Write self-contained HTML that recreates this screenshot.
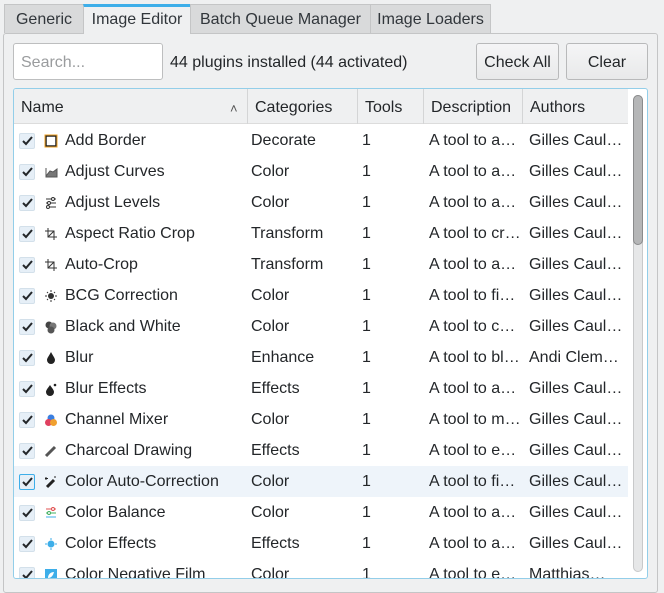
<!DOCTYPE html>
<html><head><style>
*{box-sizing:border-box;margin:0;padding:0}
body{width:664px;height:587px;overflow:hidden;background:#eff0f1;font-family:"Liberation Sans",sans-serif;font-size:16px;color:#232629;position:relative}
.a{position:absolute}
.tab{position:absolute;top:4px;height:29px;background:#d9dadb;border:1px solid #c4c5c6;border-bottom:none;line-height:30px;text-align:center;color:#31363b}
.panel{position:absolute;left:3px;top:33px;width:655px;height:560px;border:1px solid #c4c5c6;border-radius:3px;background:#eff0f1}
.btn{position:absolute;top:43px;height:37px;border:1px solid #b8b9ba;border-radius:3px;background:linear-gradient(#f5f5f6,#e8e9ea);line-height:37px;text-align:center;font-size:16px}
.list{position:absolute;left:13px;top:88px;width:635px;height:491px;border:1px solid #93cee9;border-radius:3px;background:#fff;overflow:hidden}
.hdr{position:absolute;left:0;top:0;width:614px;height:35px;background:#eff0f1;border-bottom:1px solid #dcdcdc}
.h{position:absolute;top:0;height:35px;line-height:38px;padding-left:7px;border-right:1px solid #d4d5d6}
.row{position:absolute;left:0;width:614px;height:31px}
.row span{position:absolute;top:7px;white-space:nowrap}
.cb{position:absolute;left:5px;top:8px;width:16px;height:16px;border:1px solid #d3e0ea;border-radius:2px;background:#e6eff7}
.cb svg{position:absolute;left:2px;top:2px}
.ic{position:absolute;left:30px;top:9px;width:14px;height:14px}
</style></head><body>
<div class="panel"></div>
<div class="tab" style="left:4px;width:80px">Generic</div>
<div class="tab" style="left:83px;width:108px;background:#eff0f1;border-top:3px solid #3daee9;line-height:26px;height:30px">Image Editor</div>
<div class="tab" style="left:190px;width:181px">Batch Queue Manager</div>
<div class="tab" style="left:370px;width:121px">Image Loaders</div>
<div class="a" style="left:13px;top:43px;width:150px;height:37px;border:1px solid #bdbebf;border-radius:3px;background:#fff;padding-left:7px;line-height:37px;color:#9a9c9e;font-size:16px">Search...</div>
<div class="a" style="left:170px;top:54px;font-size:16px">44 plugins installed (44 activated)</div>
<div class="btn" style="left:476px;width:83px">Check All</div>
<div class="btn" style="left:566px;width:82px">Clear</div>
<div class="list">
<div class="hdr">
<div class="h" style="left:0;width:234px">Name<span style="position:absolute;left:216px;top:1px;font-size:13px;color:#555">&#x2c4;</span></div>
<div class="h" style="left:234px;width:110px">Categories</div>
<div class="h" style="left:344px;width:66px">Tools</div>
<div class="h" style="left:410px;width:99px">Description</div>
<div class="h" style="left:509px;width:105px;border-right:none">Authors</div>
</div>
<div class="a" style="left:619px;top:6px;width:10px;height:477px;border:1px solid #c8c9ca;border-radius:5px;background:#e6e7e8"></div>
<div class="a" style="left:619px;top:6px;width:10px;height:150px;border:1px solid #8a8b8c;border-radius:5px;background:#b5b6b7"></div>
<div id="rows"></div>
</div>
<script>
var d=[["Add Border","Decorate","a…","Gilles Caul…","<rect x='2' y='2' width='10' height='10' fill='#fff' stroke='#222' stroke-width='1.5'/><rect x='1' y='1' width='12' height='12' fill='none' stroke='#f0a020' stroke-width='1'/>"],
["Adjust Curves","Color","a…","Gilles Caul…","<path d='M2 12V3M2 12h11V4L9 7 6 6 2 11z' fill='#777' stroke='#555'/>"],
["Adjust Levels","Color","a…","Gilles Caul…","<path d='M2 3h10M2 7h10M2 11h10' stroke='#333'/><circle cx='9' cy='3' r='1.5' fill='#fff' stroke='#333'/><circle cx='5' cy='7' r='1.5' fill='#fff' stroke='#333'/><circle cx='4' cy='11' r='1.5' fill='#fff' stroke='#333'/>"],
["Aspect Ratio Crop","Transform","cr…","Gilles Caul…","<path d='M4 1v9h9M1 4h9v9M4 10L10 4' stroke='#333' fill='none'/>"],
["Auto-Crop","Transform","a…","Gilles Caul…","<path d='M4 1v9h9M1 4h9v9M4 10L10 4' stroke='#333' fill='none'/>"],
["BCG Correction","Color","fi…","Gilles Caul…","<circle cx='7' cy='7' r='3' fill='#333'/><path d='M7 1v2M7 11v2M1 7h2M11 7h2M3 3l1 1M10 10l1 1M3 11l1-1M10 4l1-1' stroke='#333'/>"],
["Black and White","Color","c…","Gilles Caul…","<circle cx='5' cy='5' r='3.5' fill='#444'/><circle cx='9' cy='6' r='3.5' fill='#777'/><circle cx='7' cy='10' r='3.5' fill='#555'/>"],
["Blur","Enhance","bl…","Andi Clem…","<path d='M7 1C5 5 3 7 3 9a4 4 0 008 0c0-2-2-4-4-8z' fill='#222'/>"],
["Blur Effects","Effects","a…","Gilles Caul…","<path d='M6 3C4 6 2 8 2 10a4 4 0 008 0c0-2-2-4-4-7z' fill='#222'/><circle cx='11' cy='3' r='1.3' fill='#222'/>"],
["Channel Mixer","Color","m…","Gilles Caul…","<circle cx='7' cy='5' r='3.5' fill='#3b7fe0'/><circle cx='4.5' cy='9.5' r='3.5' fill='#e04060'/><circle cx='9.5' cy='9.5' r='3.5' fill='#f0a030'/>"],
["Charcoal Drawing","Effects","e…","Gilles Caul…","<path d='M2 12L11 3' stroke='#555' stroke-width='3'/>"],
["Color Auto-Correction","Color","fi…","Gilles Caul…","<path d='M3 12L10 5' stroke='#222' stroke-width='3'/><path d='M2 2v3M1 3.5h3M11 1v2' stroke='#222'/>"],
["Color Balance","Color","a…","Gilles Caul…","<path d='M2 3h10' stroke='#e05050'/><path d='M2 7h10' stroke='#40b060'/><path d='M2 11h10' stroke='#3daee9'/><circle cx='9' cy='3' r='1.5' fill='#fff' stroke='#e05050'/><circle cx='5' cy='7' r='1.5' fill='#fff' stroke='#40b060'/>"],
["Color Effects","Effects","a…","Gilles Caul…","<circle cx='7' cy='7' r='3.5' fill='#3daee9'/><path d='M7 1v2M7 11v2M1 7h2M11 7h2' stroke='#3daee9'/>"],
["Color Negative Film","Color","e…","Matthias…","<rect x='1' y='1' width='12' height='12' fill='#3daee9'/><path d='M4 10c0-4 3-6 6-6-1 4-3 6-6 6z' fill='#fff'/>"]];
var h="";
d.forEach(function(r,i){
var t=36+31*i;
h+="<div class='row' style='top:"+t+"px;"+(i==11?"background:#eef4fa":"")+"'>"+
"<div class='cb' style='"+(i==11?"border-color:#3daee9":"")+"'><svg width='11' height='10'><path d='M1 5l3 3 6-7' stroke='#232629' stroke-width='2' fill='none'/></svg></div>"+
"<svg class='ic' viewBox='0 0 14 14'>"+r[4]+"</svg>"+
"<span style='left:51px'>"+r[0]+"</span><span style='left:237px'>"+r[1]+"</span><span style='left:348px'>1</span><span style='left:415px'>A tool to "+r[2]+"</span><span style='left:515px'>"+r[3]+"</span></div>";});
document.getElementById("rows").innerHTML=h;
</script>
</body></html>
